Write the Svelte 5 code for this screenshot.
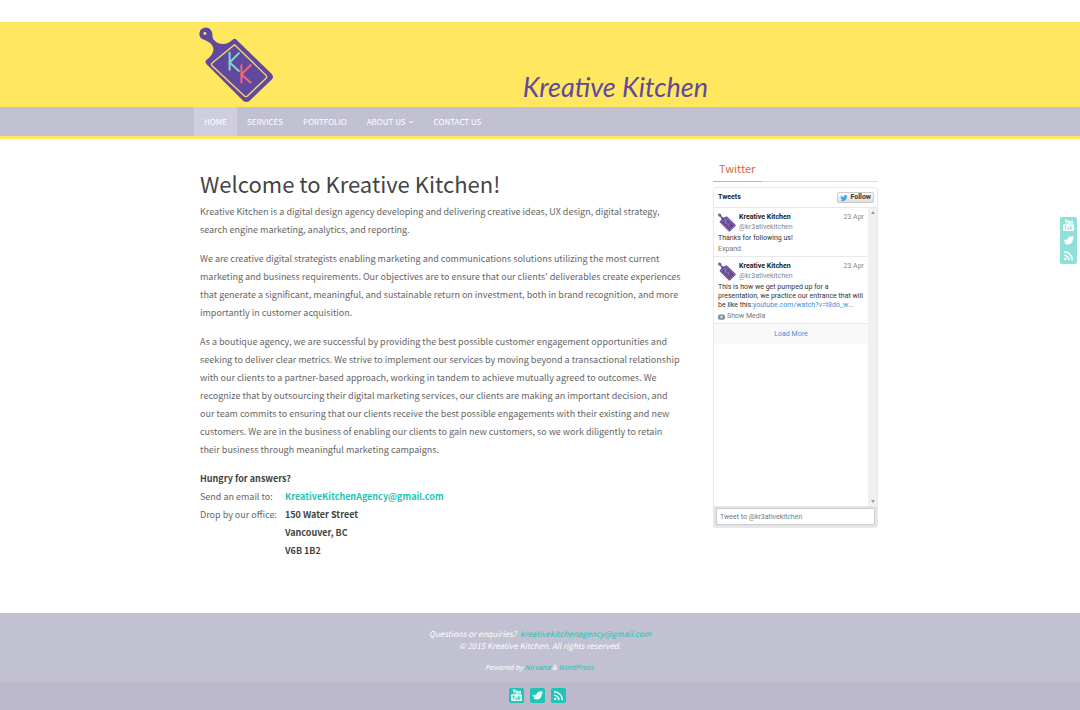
<script>
  const nav = ['Home', 'Services', 'Portfolio', 'About Us', 'Contact Us'];
  const networks = ['YouTube', 'Twitter', 'RSS'];
</script>

{#snippet logo()}
  <svg class="logo" viewBox="0 0 76 76" aria-hidden="true">
    <path fill="#61489f" fill-rule="evenodd" d="M1 4C3 0 9-1 12 3c3 4 0 7 4 11 5 5 13 4 18-1q2-2 4 0l36 35q2 3 0 5L51 75q-3 2-6 0L8 38q-3-3 0-5c5-4 8-9 6-13-2-5-8-6-11-8C0 10 0 7 1 4ZM6 5a1.500 1.500 0 1 0 0 3 1.500 1.500 0 0 0 0-3Z" />
    <path fill="none" stroke="#f3d76b" stroke-width="1.400" d="M36 18 68 49q1 2 0 3L49 70q-2 1-3 0L13 39q-1-2 1-3Z" />
    <path fill="none" stroke="#83d5ce" stroke-width="2" d="M31 25v19M41 26 31 36l10 9" />
    <path fill="none" stroke="#ee6b76" stroke-width="2" d="M43 38v19M53 38 43 48l10 9" />
  </svg>
{/snippet}

{#snippet bird()}
  <svg viewBox="0 0 24 24" aria-hidden="true"><path fill="currentColor" d="M23 5.5a9 9 0 0 1-2.600.7 4.500 4.500 0 0 0 2-2.500 9 9 0 0 1-2.900 1.100A4.500 4.500 0 0 0 11.800 9 13 13 0 0 1 2.500 4.200a4.500 4.500 0 0 0 1.400 6 4.500 4.500 0 0 1-2-.5 4.500 4.500 0 0 0 3.600 4.500 4.500 4.500 0 0 1-2 .1 4.500 4.500 0 0 0 4.200 3.100A9 9 0 0 1 1 19.300 13 13 0 0 0 20.800 7.700 9 9 0 0 0 23 5.500Z" /></svg>
{/snippet}

{#snippet social(name)}
  <a class="social" href="#{name}" aria-label={name}>
    {#if name === 'YouTube'}
      <svg viewBox="0 0 15 15" aria-hidden="true">
        <path fill="none" stroke="currentColor" stroke-width="1.100" d="M4 1.500 5.200 3.500 6.500 1.500M5.200 3.500v2M7.200 3.200h1.300v2H7.200zM10 2.700v2.500h1.400V2.700" />
        <path fill="currentColor" fill-rule="evenodd" d="M3 6.300h9q1 0 1 1V12q0 1-1 1H3q-1 0-1-1V7.300q0-1 1-1Zm.5 1.500v1h.7v3h.8v-3h.8v-1Zm3 1v3h2v-3h-.7V11h-.6V8.800ZM9.300 7.800v4h2v-3h-1.200v-1Zm.8 1.800h.5v1.400h-.5Z" />
      </svg>
    {:else if name === 'Twitter'}
      <svg viewBox="0 0 15 15" aria-hidden="true"><path fill="currentColor" d="M2 6.500c1.500.6 3 .5 4.500-.2C7 4.500 8.500 3 10.500 3.500L13 3l-1 1.500 1 .5-1.200 1c.2 3-2 5.500-5 5.500-1.500 0-2.800-.4-3.600-1.200 1 0 1.500-.2 2-.6C3.800 9.500 3 9 3 8.200h1C2.800 7.700 2.200 7.300 2 6.500Z" /></svg>
    {:else}
      <svg viewBox="0 0 15 15" aria-hidden="true"><circle cx="4.300" cy="11" r="1.300" fill="currentColor" /><path fill="none" stroke="currentColor" stroke-width="1.500" d="M3 7.200a5 5 0 0 1 5 5M3 3.800a8.400 8.400 0 0 1 8.400 8.400" /></svg>
    {/if}
  </a>
{/snippet}

{#snippet author()}
  <div class="author">
    <span class="avatar">{@render logo()}</span>
    <div class="names"><b>Kreative Kitchen</b><span>@kr3ativekitchen</span></div>
    <time>23 Apr</time>
  </div>
{/snippet}

<header>
  <div class="wrap banner">
    <a class="home" href="#home" aria-label="Kreative Kitchen home">{@render logo()}</a>
    <span class="wordmark">Kreative Kitchen</span>
  </div>
</header>
<nav>
  <div class="wrap menu">
    {#each nav as item, i}
      <a href="#{item}" class:active={i === 0}>{item}{#if item === 'About Us'}<svg class="caret" viewBox="0 0 6 4" aria-hidden="true"><path d="m1 1 2 2 2-2" fill="none" stroke="currentColor" /></svg>{/if}</a>
    {/each}
  </div>
</nav>

<div class="wrap columns">
  <main>
    <h1>Welcome to Kreative Kitchen!</h1>
    <p>Kreative Kitchen is a digital design agency developing and delivering creative ideas, UX design, digital strategy,<br />search engine marketing, analytics, and reporting.</p>
    <p>We are creative digital strategists enabling marketing and communications solutions utilizing the most current<br />marketing and business requirements. Our objectives are to ensure that our clients’ deliverables create experiences<br />that generate a significant, meaningful, and sustainable return on investment, both in brand recognition, and more<br />importantly in customer acquisition.</p>
    <p>As a boutique agency, we are successful by providing the best possible customer engagement opportunities and<br />seeking to deliver clear metrics. We strive to implement our services by moving beyond a transactional relationship<br />with our clients to a partner-based approach, working in tandem to achieve mutually agreed to outcomes. We<br />recognize that by outsourcing their digital marketing services, our clients are making an important decision, and<br />our team commits to ensuring that our clients receive the best possible engagements with their existing and new<br />customers. We are in the business of enabling our clients to gain new customers, so we work diligently to retain<br />their business through meaningful marketing campaigns.</p>
    <strong>Hungry for answers?</strong>
    <dl>
      <dt>Send an email to:</dt>
      <dd><a href="mailto:KreativeKitchenAgency@gmail.com">KreativeKitchenAgency@gmail.com</a></dd>
      <dt>Drop by our office:</dt>
      <dd>150 Water Street<br />Vancouver, BC<br />V6B 1B2</dd>
    </dl>
  </main>

  <aside>
    <h2>Twitter</h2>
    <section class="widget">
      <div class="top"><b>Tweets</b><button class="follow">{@render bird()}Follow</button></div>
      <div class="stream">
        <div class="tweets">
          <article>
            {@render author()}
            <p>Thanks for following us!</p>
            <a class="more" href="#expand">Expand</a>
          </article>
          <article>
            {@render author()}
            <p>This is how we get pumped up for a<br />presentation, we practice our entrance that will<br />be like this:<a href="#video">youtube.com/watch?v=t8do_w...</a></p>
            <a class="more" href="#media"><svg viewBox="0 0 8 6" aria-hidden="true"><rect width="8" height="6" rx="2" fill="#8a8f94" /><path d="m3 1.500 3 1.500-3 1.500Z" fill="#fff" /></svg>Show Media</a>
          </article>
          <button class="load">Load More</button>
        </div>
        <div class="track" aria-hidden="true"><i class="up"></i><i class="down"></i></div>
      </div>
      <div class="compose"><input aria-label="Tweet to @kr3ativekitchen" placeholder="Tweet to @kr3ativekitchen" /></div>
    </section>
  </aside>
</div>

<div class="side">{#each networks as n}{@render social(n)}{/each}</div>

<footer>
  <div class="info">
    <div>Questions or enquiries? &nbsp;<a href="mailto:kreativekitchenagency@gmail.com">kreativekitchenagency@gmail.com</a></div>
    <div>© 2015 Kreative Kitchen. All rights reserved.</div>
    <div class="powered">Powered by <a href="#nirvana">Nirvana</a> &amp; <a href="#wordpress">WordPress.</a></div>
  </div>
  <div class="bottom">{#each networks as n}{@render social(n)}{/each}</div>
</footer>

<style>
  :global(body) {
    margin: 0;
    background: #fff;
    color: #666;
    font: 9px/18px "Noto Sans CJK KR", "Open Sans", sans-serif;
  }
  a { color: #1fc4b4; text-decoration: none; }
  svg { display: block; }
  .wrap { max-width: 692px; margin: 0 auto; box-sizing: border-box; }
  header { margin-top: 22px; background: #ffe85f; }
  .banner { display: flex; justify-content: space-between; align-items: flex-end; padding: 5px 178px 5px 5px; }
  .home .logo { width: 75px; height: 75px; }
  .wordmark { color: #61489f; font: italic 27px/30px "Lato", cursive; }
  nav { background: #c2c1d1; border-bottom: 3px solid #ffe85f; }
  .menu { display: flex; }
  .menu a { display: flex; align-items: center; gap: 2px; padding: 1px 10px; color: #fff; font-size: 8px; line-height: 27px; text-transform: uppercase; white-space: nowrap; }
  .menu .active { background: #cfcede; }
  .caret { width: 6px; height: 4px; }
  .columns { display: grid; grid-template-columns: minmax(0, 1fr) 165px; gap: 20px; padding: 21px 8px 53px 6px; }
  main { white-space: nowrap; }
  h1 { margin: 10px 0 6px; color: #444; font-size: 22px; line-height: 27px; font-weight: 400; }
  p { margin: 0 0 11px; }
  strong, dd { color: #444; font-weight: 700; }
  dl { display: grid; grid-template-columns: 79px 1fr; column-gap: 6px; margin: 0; }
  dd { margin: 0; }
  h2 { margin: 0 0 5px; padding: 0 6px 5px; border-bottom: 1px solid #ddd; color: #cf6a43; font-size: 11px; line-height: 16px; font-weight: 400; position: relative; }
  h2::after { content: ""; position: absolute; left: 0; bottom: -1px; width: 49px; height: 1px; background: #f5a08c; }
  .widget { font: 7px/9px "Roboto", sans-serif; color: #333; border: 1px solid #e8e8e8; border-radius: 3px; }
  .top { display: flex; justify-content: space-between; align-items: center; height: 19px; padding: 0 3px 0 4px; border-bottom: 1px solid #e8e8e8; color: #222; }
  .follow { display: flex; align-items: center; gap: 2px; height: 11px; padding: 0 2px; border: 1px solid #ccc; border-radius: 2px; background: linear-gradient(#fff, #dedede); color: #333; font: 700 7px/9px "Roboto", sans-serif; }
  .follow svg { width: 8px; height: 8px; color: #45a7e8; }
  .stream { display: flex; height: 298px; }
  .tweets { flex: 1; min-width: 0; }
  article { padding: 5px 4px 2px; border-bottom: 1px solid #e8e8e8; }
  article p { margin: 2px 0; line-height: 9px; white-space: nowrap; }
  article p a, .load { color: #3b94d9; }
  .author { display: flex; gap: 3px; }
  .avatar .logo { width: 18px; height: 19px; }
  .names { flex: 1; display: grid; color: #888; }
  .names b { color: #222; }
  time { color: #888; }
  .more { display: flex; align-items: center; gap: 2px; color: #777; }
  .more svg { width: 7px; height: 6px; }
  .load { display: block; width: 100%; padding: 0; border: 0; background: #f9f9f9; font: 7px/20px "Roboto", sans-serif; }
  .track { display: flex; flex-direction: column; justify-content: space-between; align-items: center; width: 9px; padding: 3px 0; box-sizing: border-box; background: #f0f0f0; }
  .track i { border: 2px solid transparent; }
  .track .up { border-top-width: 0; border-bottom: 3px solid #999; }
  .track .down { border-bottom-width: 0; border-top: 3px solid #999; }
  .compose { padding: 2px; background: #e4e4e4; }
  input { display: block; width: 100%; height: 17px; box-sizing: border-box; padding: 0 3px; border: 1px solid #ccc; border-radius: 2px; background: #fff; font: 7px/15px "Roboto", sans-serif; }
  input::placeholder { color: #777; }
  .social { display: block; width: 15px; height: 15px; border-radius: 2px; background: #1fc4b4; color: #e8fffc; }
  .side { position: fixed; top: 217px; right: 3px; padding: 1px; border-radius: 2px; background: #1fc4b4; opacity: .5; }
  .side .social { background: none; color: #fff; }
  footer { background: #c2c1d1; color: #fff; text-align: center; font-style: italic; }
  .info { padding: 15px 0 9px; font-size: 8px; line-height: 12px; }
  .powered { margin-top: 9px; font-size: 7px; }
  .bottom { display: flex; justify-content: center; gap: 6px; padding: 6px 6px 7px 0; background: #bbb9cb; }
</style>
